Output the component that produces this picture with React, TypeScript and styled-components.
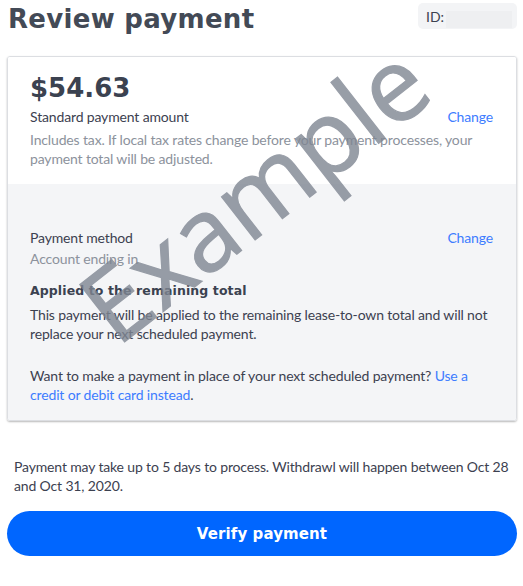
import React from "react";
import styled, { createGlobalStyle } from "styled-components";

const Global = createGlobalStyle`
  html, body { margin: 0; padding: 0; background: #ffffff; }
  body { font-family: Lato, "Open Sans", sans-serif; color: #3c4150; }
`;

const Page = styled.div`
  position: relative;
  width: 523px;
  height: 586px;
  overflow: hidden;
  padding: 0 6px 0 7px;
  box-sizing: border-box;
`;

const Header = styled.header`
  display: flex;
  justify-content: space-between;
  align-items: flex-start;
  height: 56px;
`;

const Title = styled.h1`
  margin: 0 0 0 1px;
  font-family: "DejaVu Sans", sans-serif;
  font-weight: 700;
  font-size: 26px;
  line-height: 38px;
  color: #434a56;
  letter-spacing: 0.3px;
`;

const IdBox = styled.div`
  margin-top: 3px;
  width: 99px;
  height: 26px;
  box-sizing: border-box;
  background: #f3f4f6;
  border-radius: 5px;
  display: flex;
  align-items: center;
  padding: 0 5px 0 8px;
  gap: 2px;
  font-size: 14px;
  color: #3c4150;
`;

const IdValue = styled.span`
  flex: 1;
  height: 17px;
  margin-top: 6px;
  background: #eeeff1;
`;

const Card = styled.section`
  border: 1px solid #dcdee2;
  border-radius: 3px;
  box-shadow: 0 1px 2px rgba(0, 0, 0, 0.28);
  overflow: hidden;
`;

const Section = styled.div<{ $tone: "white" | "gray"; $top: number }>`
  background: ${(p) => (p.$tone === "gray" ? "#f4f5f7" : "#ffffff")};
  padding: ${(p) => p.$top}px 23px 16px 22px;
`;

const Amount = styled.div`
  font-family: "DejaVu Sans", sans-serif;
  font-weight: 700;
  font-size: 26px;
  line-height: 34px;
  color: #3b4250;
`;

const Row = styled.div<{ $mt?: number }>`
  display: flex;
  justify-content: space-between;
  align-items: baseline;
  margin-top: ${(p) => p.$mt ?? 0}px;
`;

const Text = styled.p<{ $muted?: boolean; $mt?: number }>`
  margin: ${(p) => p.$mt ?? 0}px 0 0;
  font-size: 14px;
  line-height: 19px;
  letter-spacing: -0.15px;
  color: ${(p) => (p.$muted ? "#8c929c" : "#3c4150")};
`;

const Link = styled.a`
  color: #3d7cff;
  text-decoration: none;
  font-size: 14px;
  line-height: 19px;
  letter-spacing: -0.15px;
  cursor: pointer;
`;

const SubHead = styled.h3`
  margin: 13px 0 0;
  font-family: "DejaVu Sans", sans-serif;
  font-weight: 700;
  font-size: 12.5px;
  line-height: 19px;
  color: #3b4250;
  letter-spacing: 0.1px;
`;

const Footer = styled.p`
  margin: 36px 0 0 7px;
  font-size: 14px;
  line-height: 19px;
  letter-spacing: -0.15px;
  color: #3c4150;
`;

const Button = styled.button`
  display: block;
  width: 510px;
  height: 45px;
  margin-top: 16px;
  border: none;
  border-radius: 23px;
  background: #0066ff;
  color: #ffffff;
  font-family: "DejaVu Sans", sans-serif;
  font-weight: 700;
  font-size: 15px;
  letter-spacing: 0.1px;
  cursor: pointer;
`;

const Watermark = styled.div`
  position: absolute;
  left: 253px;
  top: 192px;
  transform: translate(-50%, -50%) rotate(-38deg);
  font-family: "Open Sans", sans-serif;
  font-weight: 400;
  font-size: 102px;
  line-height: 1;
  color: #7f8692;
  -webkit-text-stroke: 1.2px #7f8692;
  opacity: 0.8;
  white-space: nowrap;
  pointer-events: none;
`;

export default function App() {
  return (
    <>
      <Global />
      <Page>
        <Header>
          <Title>Review payment</Title>
          <IdBox>
            ID:<IdValue />
          </IdBox>
        </Header>
        <Card>
          <Section $tone="white" $top={14}>
            <Amount>$54.63</Amount>
            <Row $mt={2}>
              <Text>Standard payment amount</Text>
              <Link>Change</Link>
            </Row>
            <Text $muted $mt={4}>
              Includes tax. If local tax rates change before your payment processes, your
              payment total will be adjusted.
            </Text>
          </Section>
          <Section $tone="gray" $top={44}>
            <Row>
              <Text>Payment method</Text>
              <Link>Change</Link>
            </Row>
            <Text $muted $mt={2}>Account ending in</Text>
            <SubHead>Applied to the remaining total</SubHead>
            <Text $mt={5}>
              This payment will be applied to the remaining lease-to-own total and will not
              replace your next scheduled payment.
            </Text>
            <Text $mt={23}>
              Want to make a payment in place of your next scheduled payment?{" "}
              <Link>Use a credit or debit card instead</Link>.
            </Text>
          </Section>
        </Card>
        <Footer>
          Payment may take up to 5 days to process. Withdrawl will happen between Oct 28
          and Oct 31, 2020.
        </Footer>
        <Button>Verify payment</Button>
        <Watermark>Example</Watermark>
      </Page>
    </>
  );
}
